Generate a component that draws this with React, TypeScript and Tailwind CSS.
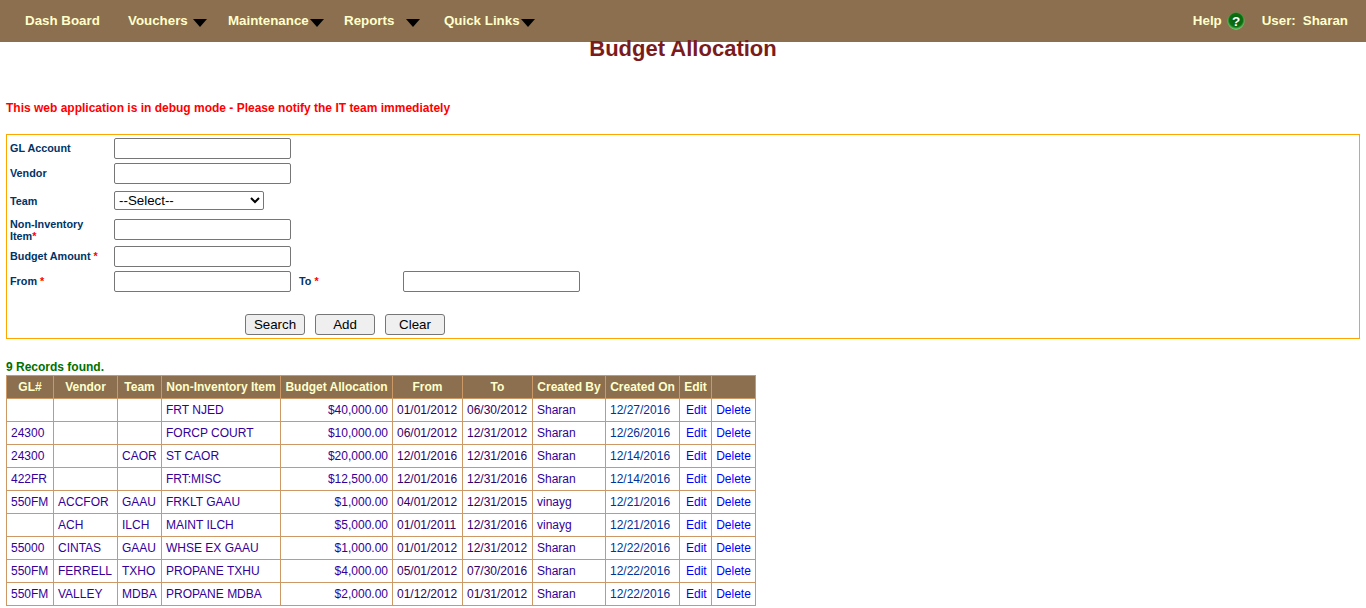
const rows = [
  ["", "", "", "FRT NJED", "$40,000.00", "01/01/2012", "06/30/2012", "Sharan", "12/27/2016"],
  ["24300", "", "", "FORCP COURT", "$10,000.00", "06/01/2012", "12/31/2012", "Sharan", "12/26/2016"],
  ["24300", "", "CAOR", "ST CAOR", "$20,000.00", "12/01/2016", "12/31/2016", "Sharan", "12/14/2016"],
  ["422FR", "", "", "FRT:MISC", "$12,500.00", "12/01/2016", "12/31/2016", "Sharan", "12/14/2016"],
  ["550FM", "ACCFOR", "GAAU", "FRKLT GAAU", "$1,000.00", "04/01/2012", "12/31/2015", "vinayg", "12/21/2016"],
  ["", "ACH", "ILCH", "MAINT ILCH", "$5,000.00", "01/01/2011", "12/31/2016", "vinayg", "12/21/2016"],
  ["55000", "CINTAS", "GAAU", "WHSE EX GAAU", "$1,000.00", "01/01/2012", "12/31/2012", "Sharan", "12/22/2016"],
  ["550FM", "FERRELL", "TXHO", "PROPANE TXHU", "$4,000.00", "05/01/2012", "07/30/2016", "Sharan", "12/22/2016"],
  ["550FM", "VALLEY", "MDBA", "PROPANE MDBA", "$2,000.00", "01/12/2012", "01/31/2012", "Sharan", "12/22/2016"],
];
const heads = ["GL#", "Vendor", "Team", "Non-Inventory Item", "Budget Allocation", "From", "To", "Created By", "Created On", "Edit", ""];
const widths = [47, 64, 44, 119, 112, 70, 70, 73, 74, 32, 44];
const cellColors = ["text-[#330099]", "text-[#330099]", "text-[#330099]", "text-[#330099]", "text-[#330099]", "text-[#330066]", "text-[#330066]", "text-[#330099]", "text-[#003399]"];

function Menu({ label, gap }: { label: string; gap: string }) {
  return (
    <div className="flex items-center">
      <span>{label}</span>
      <span className={`${gap} mt-[4px] w-0 h-0 border-x-[7px] border-x-transparent border-t-[8px] border-t-black`} />
    </div>
  );
}

function Field() {
  return <input className="w-[177px] h-[21px] bg-white border border-[#767676] rounded-[2px]" />;
}

function Label({ children, up = true }: { children: React.ReactNode; up?: boolean }) {
  return <div className={`w-[104px] text-[10.8px] leading-[12px] font-bold text-[#003366] ${up ? "pb-[2px]" : ""}`}>{children}</div>;
}

function Star() {
  return <span className="text-[#ff0000]">*</span>;
}

function Btn({ children }: { children: React.ReactNode }) {
  return (
    <button className="w-[60px] h-[21px] bg-[#efefef] border border-[#767676] rounded-[3px] text-[13.33px] leading-none text-black">
      {children}
    </button>
  );
}

export default function App() {
  return (
    <div className="font-['Liberation_Sans',Arial,sans-serif] bg-white overflow-hidden h-[608px]">
      <header className="h-[42px] bg-[#8b6f4e] flex items-center justify-between text-[13.33px] font-bold text-[#ffffcc]">
        <nav className="flex items-center pl-[25px]">
          <span className="w-[103px]">Dash Board</span>
          <div className="w-[100px]"><Menu label="Vouchers" gap="ml-[5px]" /></div>
          <div className="w-[116px]"><Menu label="Maintenance" gap="ml-[1px]" /></div>
          <div className="w-[100px]"><Menu label="Reports" gap="ml-[12px]" /></div>
          <Menu label="Quick Links" gap="ml-[1px]" />
        </nav>
        <div className="flex items-center pr-[18px]">
          <span>Help</span>
          <svg viewBox="0 0 20 20" className="w-[18px] h-[18px] ml-[5px]">
            <defs>
              <radialGradient id="helpDisc" cx="50%" cy="45%" r="55%">
                <stop offset="0%" stopColor="#0a5a0a" />
                <stop offset="70%" stopColor="#0d7010" />
                <stop offset="100%" stopColor="#7fd87f" />
              </radialGradient>
            </defs>
            <circle cx="10" cy="10" r="9.6" fill="url(#helpDisc)" />
            <text x="10" y="15.5" textAnchor="middle" fontSize="15" fontWeight="700" fill="#ffffff" fontFamily="Liberation Sans">?</text>
          </svg>
          <span className="ml-[17px]">User:</span>
          <span className="ml-[7px]">Sharan</span>
        </div>
      </header>

      <h1 className="text-[22px] leading-[14px] font-bold text-[#7b1c1c] text-center">Budget Allocation</h1>

      <div className="px-[6px]">
        <p className="mt-[45px] text-[12px] leading-[14px] font-bold text-[#ff0000]">This web application is in debug mode - Please notify the IT team immediately</p>

        <section className="mt-[19px] h-[205px] border border-[#ffa500] pl-[3px] pt-[3px]">
          <div className="flex items-center h-[21px]"><Label>GL Account</Label><Field /></div>
          <div className="flex items-center h-[21px] mt-[4px]"><Label>Vendor</Label><Field /></div>
          <div className="flex items-center h-[19px] mt-[7px]">
            <Label up={false}>Team</Label>
            <select className="w-[150px] h-[19px] bg-white border border-[#767676] rounded-[2px] text-[13.33px] leading-none text-black">
              <option>--Select--</option>
            </select>
          </div>
          <div className="flex items-center h-[21px] mt-[9px]">
            <Label up={false}>Non-Inventory<br />Item<Star /></Label><Field />
          </div>
          <div className="flex items-center h-[21px] mt-[6px]"><Label>Budget Amount <Star /></Label><Field /></div>
          <div className="flex items-center h-[21px] mt-[4px]">
            <Label>From <Star /></Label><Field />
            <div className="ml-[8px] w-[104px] text-[10.8px] font-bold text-[#003366]">To <Star /></div>
            <Field />
          </div>
          <div className="flex gap-[10px] pl-[235px] mt-[22px]">
            <Btn>Search</Btn><Btn>Add</Btn><Btn>Clear</Btn>
          </div>
        </section>

        <p className="mt-[21px] text-[12px] leading-[14px] font-bold text-[#007000]">9 Records found.</p>

        <table className="mt-[1px] border-collapse table-fixed w-[750px] text-[12px] leading-[14px]">
          <colgroup>
            {widths.map((w, i) => <col key={i} style={{ width: w }} />)}
          </colgroup>
          <thead>
            <tr className="h-[23px] bg-[#8b6f4e] text-[#ffffcc]">
              {heads.map((h, i) => (
                <th key={i} className="border border-[#cc9966] font-bold text-center p-0 whitespace-nowrap">{h}</th>
              ))}
            </tr>
          </thead>
          <tbody>
            {rows.map((r, i) => (
              <tr key={i} className="h-[23px]">
                {r.map((c, j) => (
                  <td key={j} className={`border border-[#cc9966] p-0 pl-[4px] whitespace-nowrap ${j === 4 ? "text-right pr-[4px]" : "text-left"} ${cellColors[j]}`}>{c}</td>
                ))}
                <td className="border border-[#cc9966] p-0 pl-[6px] text-left text-[#0000ff]">Edit</td>
                <td className="border border-[#cc9966] p-0 text-center text-[#0000ff]">Delete</td>
              </tr>
            ))}
          </tbody>
        </table>
      </div>
    </div>
  );
}
